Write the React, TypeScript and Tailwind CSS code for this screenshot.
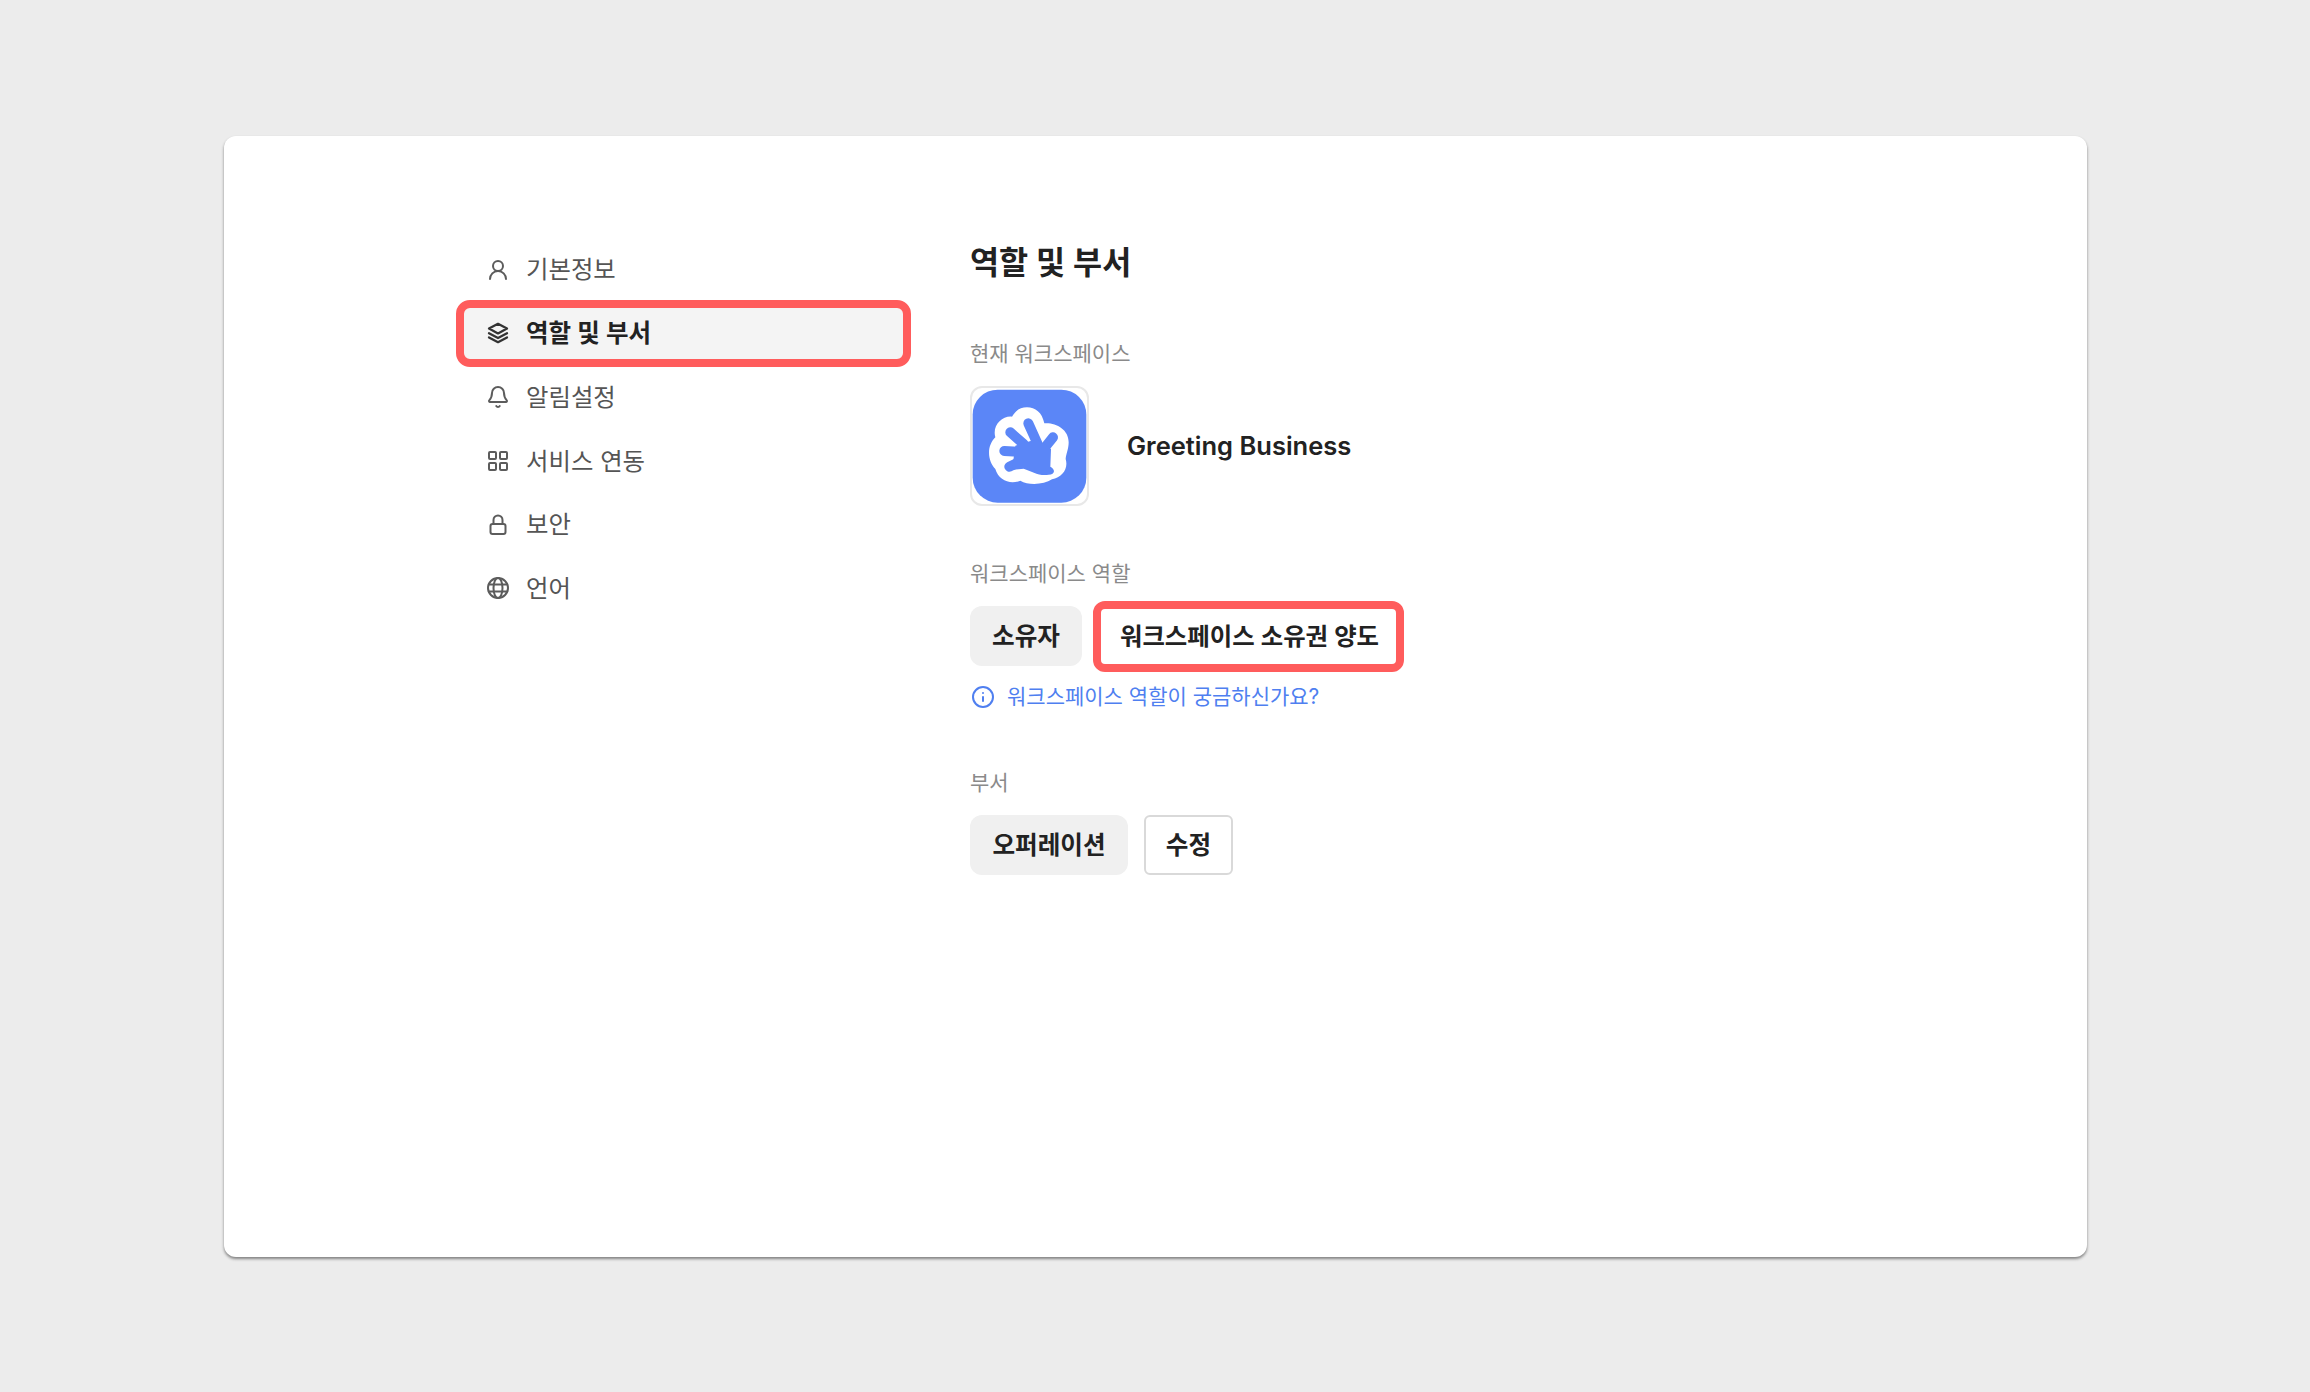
import React from "react";
import { UserRound, Bell, LayoutGrid, Info } from "lucide-react";

type IconProps = { size?: number; strokeWidth?: number; className?: string };

function StackIcon({ className }: IconProps) {
  return (
    <svg viewBox="0 0 24 24" width={24} height={24} fill="none" stroke="currentColor" strokeWidth={2.3} strokeLinejoin="round" strokeLinecap="round" className={className}>
      <path d="M12 2.8L21 7.6L12 12.4L3 7.6Z" />
      <path d="M3 12.2L12 17L21 12.2" />
      <path d="M3 16.4L12 21.2L21 16.4" />
    </svg>
  );
}

function LockIcon({ className }: IconProps) {
  return (
    <svg viewBox="0 0 24 24" width={24} height={24} fill="none" stroke="currentColor" strokeWidth={2} strokeLinejoin="round" strokeLinecap="round" className={className}>
      <rect x="4.5" y="11" width="15" height="10" rx="2" />
      <path d="M7.5 11V7a4.5 4.5 0 0 1 9 0v4" />
    </svg>
  );
}

function GlobeIcon({ className }: IconProps) {
  return (
    <svg viewBox="0 0 24 24" width={24} height={24} fill="none" stroke="currentColor" strokeWidth={2} strokeLinejoin="round" strokeLinecap="round" className={className}>
      <circle cx="12" cy="12" r="10" />
      <ellipse cx="12" cy="12" rx="4.5" ry="10" />
      <path d="M2.8 8.5H21.2" />
      <path d="M2.8 15.5H21.2" />
    </svg>
  );
}

const nav = [
  { label: "기본정보", Icon: UserRound },
  { label: "역할 및 부서", Icon: StackIcon, active: true },
  { label: "알림설정", Icon: Bell },
  { label: "서비스 연동", Icon: LayoutGrid },
  { label: "보안", Icon: LockIcon },
  { label: "언어", Icon: GlobeIcon },
];

function Logo() {
  return (
    <div className="w-[119px] h-[120px] rounded-[12px] border-2 border-[#e8e8e8] bg-white flex items-center justify-center">
      <svg viewBox="35 25 345 345" className="w-[115px] h-[115px]">
        <rect x="37" y="27" width="341" height="339" rx="75" fill="#5b86f7" />
        <path
          d="M200 80C225 80 245 95 252 128C285 125 325 145 325 185C325 205 317 220 316 235C325 265 305 290 275 296C250 312 205 315 180 300C150 312 115 300 105 265C85 245 75 200 105 170C95 135 125 105 155 108C165 90 180 80 200 80Z"
          fill="#ffffff"
        />
        <g stroke="#5b86f7" strokeWidth="30" strokeLinecap="round" fill="none">
          <path d="M150 155L190 190" />
          <path d="M204 128L232 190" />
          <path d="M278 170L250 205" />
          <path d="M132 211L175 213" />
          <path d="M147 258L185 240" />
        </g>
        <path d="M165 195L230 175L272 205L270 258C288 268 282 282 265 282C235 287 215 272 190 264L155 268Z" fill="#5b86f7" />
      </svg>
    </div>
  );
}

export default function App() {
  return (
    <div className="w-[2310px] h-[1392px] bg-[#ececec] pt-[136px] pl-[224px] font-['Inter','Noto_Sans_CJK_KR',sans-serif] overflow-hidden">
      <div className="w-[1863px] h-[1121px] bg-white rounded-[12px] shadow-[0_2px_3px_rgba(0,0,0,0.45)] flex pl-[240px] pt-[108px]">
        <nav className="w-[439px] flex flex-col gap-[12.8px]">
          {nav.map(({ label, Icon, active }) => (
            <div
              key={label}
              className={
                active
                  ? "h-[51px] flex items-center pl-[22px] gap-[16px] rounded-[6px] bg-[#f4f4f4] outline-8 outline-[#ff5c5c] text-[#222222] font-semibold text-[24.5px]"
                  : "h-[51px] flex items-center pl-[22px] gap-[16px] text-[#555555] text-[24.4px]"
              }
            >
              <Icon size={24} strokeWidth={2} className={active ? "text-[#333333]" : "text-[#5c5c5c]"} />
              <span>{label}</span>
            </div>
          ))}
        </nav>

        <main className="ml-[67px] flex flex-col">
          <h1 className="-mt-[1px] h-[40px] leading-[40px] text-[31.6px] font-semibold text-[#222222]">역할 및 부서</h1>
          <div className="mt-[58px] h-[26px] leading-[26px] text-[21px] text-[#8a8a8a]">현재 워크스페이스</div>
          <div className="mt-[19px] flex items-center gap-[38px]">
            <Logo />
            <span className="text-[25.5px] font-semibold text-[#222222]">Greeting Business</span>
          </div>

          <div className="mt-[55px] h-[26px] leading-[26px] text-[21px] text-[#8a8a8a]">워크스페이스 역할</div>
          <div className="mt-[19px] flex items-center gap-[19px]">
            <button className="w-[112px] h-[60px] rounded-[12px] bg-[#f0f0f0] text-[24.6px] font-semibold text-[#222222]">소유자</button>
            <button className="w-[295px] h-[55px] pl-[2px] rounded-[4px] bg-white outline-8 outline-[#ff5c5c] text-[24.4px] font-semibold text-[#222222]">워크스페이스 소유권 양도</button>
          </div>
          <div className="mt-[18px] flex items-center gap-[13px] text-[#4f7ff0] text-[21px] h-[26px]">
            <Info size={24} strokeWidth={2} className="ml-[1px] -mr-[1px]" />
            <span>워크스페이스 역할이 궁금하신가요?</span>
          </div>

          <div className="mt-[60px] h-[26px] leading-[26px] text-[21px] text-[#8a8a8a]">부서</div>
          <div className="mt-[19px] flex items-center gap-[16px]">
            <button className="w-[158px] h-[60px] rounded-[12px] bg-[#f0f0f0] text-[24.6px] font-semibold text-[#222222]">오퍼레이션</button>
            <button className="w-[89px] h-[60px] rounded-[6px] border-2 border-[#d9d9d9] bg-white text-[24.6px] font-semibold text-[#222222]">수정</button>
          </div>
        </main>
      </div>
    </div>
  );
}
